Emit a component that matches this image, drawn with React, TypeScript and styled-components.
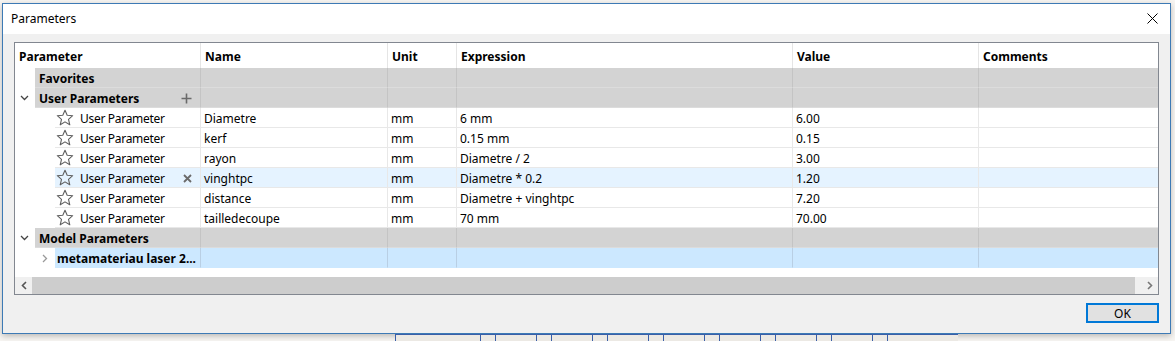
import React from "react";
import styled, { createGlobalStyle } from "styled-components";

const Global = createGlobalStyle`
  html, body { margin: 0; padding: 0; }
  body {
    background: #f7f5f2;
    font-family: "Noto Sans", "Open Sans", sans-serif;
    font-size: 12px;
    color: #000;
    width: 1175px;
    height: 341px;
    overflow: hidden;
  }
`;

const Desktop = styled.div`
  padding: 3px 4px 0 2px;
  display: flex;
  flex-direction: column;
`;

const Window = styled.div`
  width: 1169px;
  height: 331px;
  box-sizing: border-box;
  border: 1px solid #3d7ab5;
  background: #f0f0f0;
  display: flex;
  flex-direction: column;
  box-shadow: 0 2px 6px rgba(0,0,0,0.25);
`;

const TitleBar = styled.div`
  height: 30px;
  background: #fff;
  display: flex;
  align-items: center;
  justify-content: space-between;
  padding: 0 12px 2px 8px;
  box-sizing: border-box;
  font-size: 12px;
`;

const CloseBtn = styled.div`
  width: 12px;
  height: 12px;
  display: flex;
  align-items: center;
  justify-content: center;
`;

const Body = styled.div`
  flex: 1;
  display: flex;
  flex-direction: column;
  padding: 8px 11px 0 11px;
`;

const Frame = styled.div`
  border: 1px solid #828790;
  background: #fff;
  height: 253px;
  box-sizing: border-box;
  display: flex;
  flex-direction: column;
`;

const COLS = "185px 187px 69px 336px 186px 1fr";

const HeaderRow = styled.div`
  display: grid;
  grid-template-columns: ${COLS};
  height: 25px;
`;

const HeaderCell = styled.div<{ $first?: boolean }>`
  font-weight: 700;
  padding: 2px 0 0 4px;
  display: flex;
  align-items: center;
  border-left: ${(p) => (p.$first ? "none" : "1px solid #e5e5e5")};
`;

const Row = styled.div`
  display: grid;
  grid-template-columns: ${COLS};
  height: 20px;
`;

const Lead = styled.div<{ $indent: number; $bg: string; $line: string }>`
  display: flex;
  align-items: stretch;
  padding-left: ${(p) => p.$indent}px;
  position: relative;
  & > .content {
    flex: 1;
    display: flex;
    align-items: center;
    padding-top: 1px;
    background: ${(p) => p.$bg};
    border-bottom: 1px solid ${(p) => p.$line};
    min-width: 0;
  }
`;

const Toggle = styled.div<{ $left: number }>`
  position: absolute;
  left: ${(p) => p.$left}px;
  top: 0;
  height: 20px;
  display: flex;
  align-items: center;
`;

const Cell = styled.div<{ $bg: string; $line: string; $sep: string }>`
  background: ${(p) => p.$bg};
  border-bottom: 1px solid ${(p) => p.$line};
  border-left: 1px solid ${(p) => p.$sep};
  padding: 1px 0 0 3px;
  display: flex;
  align-items: center;
  white-space: nowrap;
  overflow: hidden;
`;

const GroupLabel = styled.span<{ $pad?: number }>`
  font-weight: 700;
  padding-left: ${(p) => p.$pad ?? 4}px;
  flex: 1;
`;

const ParamLabel = styled.span`
  padding-left: 6px;
  flex: 1;
  letter-spacing: -0.3px;
`;

const StarWrap = styled.span`
  display: flex;
  align-items: center;
  padding-left: 1px;
`;

const RowIcon = styled.span`
  display: flex;
  align-items: center;
  padding-right: 8px;
`;

const Filler = styled.div`
  flex: 1;
`;

const ScrollBar = styled.div`
  height: 17px;
  display: grid;
  grid-template-columns: 17px 1fr 17px;
  background: #f0f0f0;
`;

const ScrollBtn = styled.div`
  display: flex;
  align-items: center;
  justify-content: center;
`;

const Thumb = styled.div`
  margin: 0 6px 0 0;
  background: #cdcdcd;
`;

const Footer = styled.div`
  display: flex;
  justify-content: flex-end;
  padding-top: 8px;
`;

const OkButton = styled.button`
  width: 73px;
  height: 20px;
  box-sizing: border-box;
  border: 2px solid #0078d7;
  background: #e1e1e1;
  font-family: inherit;
  font-size: 12px;
  padding: 0;
  color: #000;
`;

const BottomStrip = styled.div`
  height: 8px;
  margin-left: 393px;
  display: flex;
`;

const Slot = styled.div<{ $w: number }>`
  width: ${(p) => p.$w}px;
  border-left: 1px solid #3a5fa8;
  border-top: 1px solid #3a5fa8;
  background: #ece9e4;
`;

const Star = () => (
  <svg width="18" height="18" viewBox="0 0 18 18">
    <path
      d="M9 1.2 L11.2 6.3 L16.7 6.7 L12.5 10.3 L13.8 15.8 L9 12.9 L4.2 15.8 L5.5 10.3 L1.3 6.7 L6.8 6.3 Z"
      fill="none"
      stroke="#5f5f5f"
      strokeWidth="1.1"
      strokeLinejoin="round"
    />
  </svg>
);

const ChevronDown = () => (
  <svg width="9" height="6" viewBox="0 0 9 6">
    <path d="M1 1 L4.5 4.5 L8 1" fill="none" stroke="#444" strokeWidth="1.3" />
  </svg>
);

const ChevronRight = () => (
  <svg width="6" height="9" viewBox="0 0 6 9">
    <path d="M1 1 L4.5 4.5 L1 8" fill="none" stroke="#999" strokeWidth="1.3" />
  </svg>
);

const Plus = () => (
  <svg width="11" height="11" viewBox="0 0 11 11">
    <path d="M5.5 0.5 V10.5 M0.5 5.5 H10.5" stroke="#6a6a6a" strokeWidth="1.6" />
  </svg>
);

const Cross = () => (
  <svg width="9" height="9" viewBox="0 0 9 9">
    <path d="M1 1 L8 8 M8 1 L1 8" stroke="#6a6a6a" strokeWidth="1.8" />
  </svg>
);

type Group = { kind: "group"; label: string; open?: boolean; plus?: boolean };
type Param = {
  kind: "param";
  name: string;
  unit: string;
  expr: string;
  value: string;
  hover?: boolean;
  del?: boolean;
};
type Model = { kind: "model"; label: string };
type RowData = Group | Param | Model;

const rows: RowData[] = [
  { kind: "group", label: "Favorites" },
  { kind: "group", label: "User Parameters", open: true, plus: true },
  { kind: "param", name: "Diametre", unit: "mm", expr: "6 mm", value: "6.00" },
  { kind: "param", name: "kerf", unit: "mm", expr: "0.15 mm", value: "0.15" },
  { kind: "param", name: "rayon", unit: "mm", expr: "Diametre / 2", value: "3.00" },
  { kind: "param", name: "vinghtpc", unit: "mm", expr: "Diametre * 0.2", value: "1.20", hover: true, del: true },
  { kind: "param", name: "distance", unit: "mm", expr: "Diametre + vinghtpc", value: "7.20" },
  { kind: "param", name: "tailledecoupe", unit: "mm", expr: "70 mm", value: "70.00" },
  { kind: "group", label: "Model Parameters", open: true },
  { kind: "model", label: "metamateriau laser 2..." },
];

const GROUP_BG = "#d3d3d3";
const GROUP_LINE = "#dcdcdc";
const GROUP_SEP = "#c4c4c4";

const renderRow = (r: RowData, i: number) => {
  if (r.kind === "group") {
    return (
      <Row key={i}>
        <Lead $indent={20} $bg={GROUP_BG} $line={GROUP_LINE}>
          {r.open && (
            <Toggle $left={5}>
              <ChevronDown />
            </Toggle>
          )}
          <div className="content">
            <GroupLabel>{r.label}</GroupLabel>
            {r.plus && (
              <RowIcon>
                <Plus />
              </RowIcon>
            )}
          </div>
        </Lead>
        {[0, 1, 2, 3, 4].map((c) => (
          <Cell key={c} $bg={GROUP_BG} $line={GROUP_LINE} $sep={GROUP_SEP} />
        ))}
      </Row>
    );
  }
  if (r.kind === "model") {
    const bg = "#cce8ff";
    return (
      <Row key={i}>
        <Lead $indent={40} $bg={bg} $line={bg}>
          <Toggle $left={27}>
            <ChevronRight />
          </Toggle>
          <div className="content">
            <GroupLabel $pad={2}>{r.label}</GroupLabel>
          </div>
        </Lead>
        {[0, 1, 2, 3, 4].map((c) => (
          <Cell key={c} $bg={bg} $line={bg} $sep="#b9cfe4" />
        ))}
      </Row>
    );
  }
  const bg = r.hover ? "#e5f3ff" : "#ffffff";
  const line = "#e8e8e8";
  return (
    <Row key={i}>
      <Lead $indent={40} $bg={bg} $line={line}>
        <div className="content">
          <StarWrap>
            <Star />
          </StarWrap>
          <ParamLabel>User Parameter</ParamLabel>
          {r.del && (
            <RowIcon>
              <Cross />
            </RowIcon>
          )}
        </div>
      </Lead>
      <Cell $bg={bg} $line={line} $sep={line}>{r.name}</Cell>
      <Cell $bg={bg} $line={line} $sep={line}>{r.unit}</Cell>
      <Cell $bg={bg} $line={line} $sep={line}>{r.expr}</Cell>
      <Cell $bg={bg} $line={line} $sep={line}>{r.value}</Cell>
      <Cell $bg={bg} $line={line} $sep={line}></Cell>
    </Row>
  );
};

export default function App() {
  return (
    <>
      <Global />
      <Desktop>
        <Window>
          <TitleBar>
            <span>Parameters</span>
            <CloseBtn>
              <svg width="11" height="11" viewBox="0 0 11 11">
                <path d="M0.5 0.5 L10.5 10.5 M10.5 0.5 L0.5 10.5" stroke="#000" strokeWidth="1" />
              </svg>
            </CloseBtn>
          </TitleBar>
          <Body>
            <Frame>
              <HeaderRow>
                <HeaderCell $first>Parameter</HeaderCell>
                <HeaderCell>Name</HeaderCell>
                <HeaderCell>Unit</HeaderCell>
                <HeaderCell>Expression</HeaderCell>
                <HeaderCell>Value</HeaderCell>
                <HeaderCell>Comments</HeaderCell>
              </HeaderRow>
              {rows.map(renderRow)}
              <Filler />
              <ScrollBar>
                <ScrollBtn>
                  <svg width="6" height="9" viewBox="0 0 6 9">
                    <path d="M5 1 L1.5 4.5 L5 8" fill="none" stroke="#555" strokeWidth="1.6" />
                  </svg>
                </ScrollBtn>
                <Thumb />
                <ScrollBtn>
                  <svg width="6" height="9" viewBox="0 0 6 9">
                    <path d="M1 1 L4.5 4.5 L1 8" fill="none" stroke="#777" strokeWidth="1.6" />
                  </svg>
                </ScrollBtn>
              </ScrollBar>
            </Frame>
            <Footer>
              <OkButton>OK</OkButton>
            </Footer>
          </Body>
        </Window>
        <BottomStrip>
          <Slot $w={84} />
          <Slot $w={14} />
          <Slot $w={40} />
          <Slot $w={14} />
          <Slot $w={40} />
          <Slot $w={14} />
          <Slot $w={40} />
          <Slot $w={14} />
          <Slot $w={40} />
          <Slot $w={14} />
          <Slot $w={40} />
          <Slot $w={14} />
          <Slot $w={40} />
          <Slot $w={14} />
          <Slot $w={40} />
          <Slot $w={14} />
          <Slot $w={70} />
        </BottomStrip>
      </Desktop>
    </>
  );
}
